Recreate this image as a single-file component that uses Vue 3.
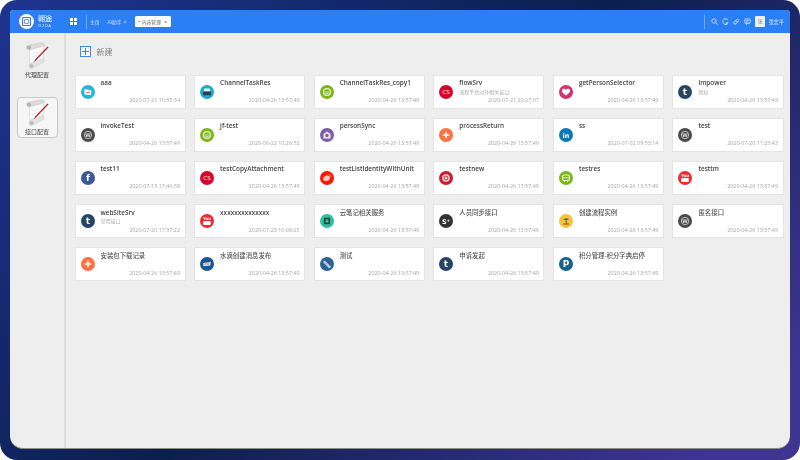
<template>
  <div class="frame">
    <div class="window">
      <header class="topbar">
        <div class="logo">
          <div class="logo-badge">
            <svg viewBox="0 0 15 15" width="15" height="15">
              <circle cx="7.5" cy="7.5" r="7.5" fill="#fff" />
              <rect x="3.5" y="3.5" width="8" height="8" rx="1" fill="none" stroke="#2b7ff5" stroke-width="1.2" />
              <rect x="5.7" y="5.7" width="3.6" height="3.6" fill="none" stroke="#2b7ff5" stroke-width="0.8" />
            </svg>
          </div>
          <div class="logo-text">
            <div class="logo-cn">翱途</div>
            <div class="logo-en">O2OA</div>
          </div>
        </div>
        <div class="apps"><i></i><i></i><i></i><i></i></div>
        <div class="divider first"></div>
        <nav class="tabs">
          <span class="tab">主页</span>
          <span class="tab">AI助手<b>×</b></span>
          <span class="tab active"><em></em>内容管理<b>×</b></span>
        </nav>
        <div class="right">
          <div class="divider"></div>
          <svg class="tool" viewBox="0 0 8 8"><circle cx="3.4" cy="3.4" r="2.5" /><path d="M5.2 5.2 7.4 7.4" /></svg>
          <svg class="tool" viewBox="0 0 8 8"><path d="M6.8 2.4A3.2 3.2 0 1 0 6.9 5.4L4.6 5.4" /><path d="M4 7.4h2" /></svg>
          <svg class="tool" viewBox="0 0 8 8"><path d="M1 5 5 1.2 7 3 3.2 6.8H1z" /><path d="M3 3.2 5 5" /></svg>
          <svg class="tool" viewBox="0 0 8 8"><rect x="1" y="1" width="6" height="5" rx="0.6" /><path d="M2.6 3h2.8M2.6 4.4h1.8M3 6 2.6 7.4 4.4 6" /></svg>
          <div class="avatar">张</div>
          <span class="user">张志平</span>
        </div>
      </header>
      <div class="body">
        <aside class="sidebar">
          <div v-for="item in menu" :key="item.label" class="menu-item" :class="{ selected: item.selected }">
            <svg class="scroll" viewBox="0 0 24 28" width="24" height="28">
              <path d="M4.5 7 19 3 18 18 5 24z" fill="#fbfbfb" stroke="#c4c4c4" stroke-width="0.5" />
              <path d="M7 12 16 9M7 15 15 12.5" stroke="#dedede" stroke-width="0.6" />
              <path d="M1.5 5.5C1.5 4 2.5 3.5 4 3L16 .8C18.5.4 20 1.5 19.5 3.5L7 7.500C4 8.500 2 8 1.500 5.500z" fill="#dcdcdc" stroke="#c0c0c0" stroke-width="0.4" />
              <ellipse cx="4" cy="5.5" rx="2.2" ry="2" fill="#b2b2b2" />
              <path d="M4 24C4 22 5 21.500 6 21L17 17C19 16.500 20 18 19 20L8 26C5.500 27 4 26 4 24z" fill="#e2e2e2" stroke="#c0c0c0" stroke-width="0.4" />
              <ellipse cx="6.5" cy="24" rx="2" ry="1.8" fill="#b8b8b8" />
              <path d="M10 18.500 23 5" stroke="#b3202a" stroke-width="1.2" />
              <path d="M10 18.500 8.800 19.800" stroke="#444" stroke-width="0.9" />
            </svg>
            <span class="menu-label">{{ item.label }}</span>
          </div>
        </aside>
        <main class="main">
          <div class="toolbar">
            <span class="add-btn"></span>
            <span class="add-text">新建</span>
          </div>
          <div class="grid">
            <div v-for="card in cards" :key="card.name" class="card">
              <span class="icon" :style="{ background: card.color }">
                <svg viewBox="0 0 14 14" width="14" height="14">
                  <template v-if="card.kind === 'image'">
                    <path d="M3.5 4 10.5 5.5 10 10 3.5 9.5z" fill="#fff" />
                    <path d="M5 8 9 7" stroke="#e0563f" stroke-width="1" />
                  </template>
                  <template v-else-if="card.kind === 'print'">
                    <path d="M4.5 3.5h5l1 3h-7z" fill="#e9f7fa" />
                    <rect x="3" y="6.5" width="8" height="3.8" rx="0.5" fill="#27404f" />
                  </template>
                  <template v-else-if="card.kind === 'ring'">
                    <circle cx="7" cy="7" r="3.4" fill="none" stroke="#e8f3d2" stroke-width="1.3" />
                    <path d="M5 7h4M5.5 8.500h3" stroke="#e8f3d2" stroke-width="0.8" />
                  </template>
                  <template v-else-if="card.kind === 'bus'">
                    <rect x="3.5" y="4" width="7" height="5.5" rx="1.5" fill="none" stroke="#f1f7e0" stroke-width="1.1" />
                    <path d="M4 6.800h6M5 10.500h1M8 10.500h1" stroke="#f1f7e0" stroke-width="0.9" />
                  </template>
                  <template v-else-if="card.kind === 'lastfm'">
                    <text x="7" y="9.2" class="glyph thin">CS</text>
                  </template>
                  <template v-else-if="card.kind === 'heart'">
                    <path d="M7 10.500C3.500 8 3 6.800 3 5.800 3 4.400 4 3.800 5 3.800 6 3.800 6.600 4.400 7 5 7.400 4.400 8 3.800 9 3.800 10 3.800 11 4.400 11 5.800 11 6.800 10.500 8 7 10.500z" fill="#fff" />
                  </template>
                  <template v-else-if="card.kind === 'wp'">
                    <circle cx="7" cy="7" r="3.7" fill="none" stroke="#ddd" stroke-width="0.8" />
                    <text x="7" y="8.9" class="glyph wp">W</text>
                  </template>
                  <template v-else-if="card.kind === 'camera'">
                    <path d="M7 3.500 10.500 6v4.500h-7V6z" fill="#efe8f6" />
                    <circle cx="7" cy="7.5" r="1.7" fill="#7b5ea7" />
                  </template>
                  <template v-else-if="card.kind === 'plus'">
                    <path d="M7 3.800v6.400M3.800 7h6.400" stroke="#fff" stroke-width="1.6" />
                  </template>
                  <template v-else-if="card.kind === 'weibo'">
                    <path d="M3 8c0-2 2.500-3.500 4.500-3.500S10 5.500 9.800 7.500C9.500 9.500 7.500 10 6 10S3 9.500 3 8z" fill="#ffc9c0" />
                    <path d="M9 3.500c1.500 0 2.300 1.200 2 2.500" stroke="#ffc9c0" stroke-width="0.7" fill="none" />
                  </template>
                  <template v-else-if="card.kind === 'pin'">
                    <circle cx="7" cy="7" r="3.8" fill="#f6dfe1" />
                    <circle cx="7" cy="7" r="2" fill="none" stroke="#c81e2d" stroke-width="1" />
                  </template>
                  <template v-else-if="card.kind === 'youtube'">
                    <text x="7" y="6.4" class="glyph yt">You</text>
                    <rect x="3.2" y="6.9" width="7.6" height="4.1" rx="1" fill="#fff" />
                  </template>
                  <template v-else-if="card.kind === 'book'">
                    <rect x="4" y="3.8" width="6" height="6.4" fill="#1e3f3a" />
                    <rect x="5.5" y="5.3" width="3" height="3.4" fill="#2fbf9f" />
                  </template>
                  <template v-else-if="card.kind === 'palm'">
                    <path d="M3.500 6C5 4 9 3.800 10.800 5.800 9 5.300 8.200 5.500 7.500 6L7.800 9.500H6.800L6.800 6C5.800 5.500 4.800 5.500 3.500 6z" fill="#27613b" />
                    <path d="M4 10h6" stroke="#3b3b2b" stroke-width="0.8" />
                  </template>
                  <template v-else-if="card.kind === 'digg'">
                    <path d="M3.200 6 10.800 5l-.4 3.500-7 .7z" fill="#dbe8f3" />
                    <path d="M4.500 7h5" stroke="#1a5590" stroke-width="0.5" />
                  </template>
                  <template v-else-if="card.kind === 'clip'">
                    <path d="M4.500 5 9.500 10" stroke="#d5e3f0" stroke-width="2.4" stroke-linecap="round" />
                    <path d="M4.500 5 9 9.500" stroke="#2f6198" stroke-width="0.4" />
                  </template>
                  <text v-else x="7" y="10" class="glyph" :class="{ small: card.small }">{{ card.glyph }}</text>
                </svg>
              </span>
              <div class="info">
                <div class="name" :class="{ cjk: isCjk(card.name) }">{{ card.name }}</div>
                <div class="desc">{{ card.desc }}</div>
                <div class="time">{{ card.time }}</div>
              </div>
            </div>
          </div>
        </main>
      </div>
    </div>
  </div>
</template>

<script setup>
const T = '2020-04-26 13:57:49'

const menu = [
  { label: '代理配置', selected: false },
  { label: '接口配置', selected: true }
]

const cards = [
  { name: 'aaa', time: '2020-07-21 10:55:34', color: '#28b5d6', kind: 'image' },
  { name: 'ChannelTaskRes', time: T, color: '#22a9c8', kind: 'print' },
  { name: 'ChannelTaskRes_copy1', time: T, color: '#7cb518', kind: 'ring' },
  { name: 'flowSrv', desc: '流程平台对外相关接口', time: '2020-07-21 20:27:07', color: '#d90429', kind: 'lastfm' },
  { name: 'getPersonSelector', time: T, color: '#d6336c', kind: 'heart' },
  { name: 'impower', desc: '授权', time: T, color: '#274567', glyph: 't' },
  { name: 'invokeTest', time: T, color: '#4a4a4a', kind: 'wp' },
  { name: 'jf-test', time: '2020-06-22 10:26:52', color: '#7cb518', kind: 'ring' },
  { name: 'personSync', time: T, color: '#7b5ea7', kind: 'camera' },
  { name: 'processReturn', time: T, color: '#ff7043', kind: 'plus' },
  { name: 'ss', time: '2020-07-02 09:53:14', color: '#0b78b8', glyph: 'in', small: true },
  { name: 'test', time: '2020-07-20 11:25:43', color: '#4a4a4a', kind: 'wp' },
  { name: 'test11', time: '2020-07-15 17:46:38', color: '#3b5998', glyph: 'f' },
  { name: 'testCopyAttachment', time: T, color: '#d90429', kind: 'lastfm' },
  { name: 'testListIdentityWithUnit', time: T, color: '#f71a06', kind: 'weibo' },
  { name: 'testnew', time: T, color: '#c81e2d', kind: 'pin' },
  { name: 'testres', time: T, color: '#7cb518', kind: 'bus' },
  { name: 'testtm', time: T, color: '#ee2a2e', kind: 'youtube' },
  { name: 'webSiteSrv', desc: '常用接口', time: '2020-07-20 17:37:22', color: '#274567', glyph: 't' },
  { name: 'xxxxxxxxxxxxxx', time: '2020-07-23 16:08:25', color: '#ee2a2e', kind: 'youtube' },
  { name: '云笔记相关服务', time: T, color: '#2fbf9f', kind: 'book' },
  { name: '人员同步接口', time: T, color: '#333333', glyph: 'S⁺', small: true },
  { name: '创建流程实例', time: T, color: '#fbc13c', kind: 'palm' },
  { name: '匿名接口', time: T, color: '#4a4a4a', kind: 'wp' },
  { name: '安装包下载记录', time: T, color: '#ff7043', kind: 'plus' },
  { name: '水滴创建消息发布', time: T, color: '#1a5590', kind: 'digg' },
  { name: '测试', time: T, color: '#2f6198', kind: 'clip' },
  { name: '申诉发起', time: T, color: '#274567', glyph: 't' },
  { name: '积分管理-积分字典启停', time: T, color: '#156190', glyph: 'P' }
]

function isCjk(text) {
  return /[^\x00-\x7f]/.test(text)
}
</script>

<style>
html, body {
  background: #fff;
  overflow: hidden;
}
</style>

<style scoped>
.frame {
  width: 800px;
  height: 460px;
  box-sizing: border-box;
  padding: 10px 10px 11px;
  border-radius: 17px;
  background: linear-gradient(135deg, #1e3591 0%, #0b1f4e 49%, #3f3590 92%);
  font-family: "Open Sans", "Noto Sans CJK SC", sans-serif;
  overflow: hidden;
}
.window {
  height: 100%;
  display: flex;
  flex-direction: column;
  background: #eeeeee;
  border-radius: 4px 4px 13px 13px;
  border-bottom: 1px solid #8d8d86;
  box-sizing: border-box;
  overflow: hidden;
  filter: blur(0.4px);
}
.topbar {
  height: 23px;
  flex: none;
  display: flex;
  align-items: center;
  background: #2b7ff5;
  color: #fff;
}
.logo {
  display: flex;
  align-items: center;
  margin-left: 9px;
}
.logo-badge {
  width: 15px;
  height: 15px;
}
.logo-badge svg {
  display: block;
}
.logo-text {
  margin-left: 3px;
  width: 16px;
  text-align: center;
}
.logo-cn {
  font-size: 7px;
  line-height: 8px;
}
.logo-en {
  margin-top: 1px;
  font-size: 3.5px;
  line-height: 4px;
  letter-spacing: 1px;
}
.apps {
  display: grid;
  grid-template-columns: 3px 3px;
  gap: 1px;
  margin-left: 17px;
}
.apps i {
  width: 3px;
  height: 3px;
  background: #fff;
}
.divider {
  width: 1px;
  height: 14px;
  background: #6fa8f8;
}
.divider.first {
  margin-left: 9px;
}
.tabs {
  display: flex;
  align-items: center;
  margin-left: 3px;
  font-size: 4.8px;
  color: #d5e5fd;
}
.tab {
  margin-right: 8px;
  white-space: nowrap;
}
.tab b {
  font-weight: 400;
  margin-left: 2px;
  font-size: 5.5px;
}
.tab.active {
  display: flex;
  align-items: center;
  height: 10.5px;
  width: 36px;
  box-sizing: border-box;
  padding-left: 3.5px;
  background: #fff;
  color: #666;
  border-radius: 1.5px;
}
.tab.active em {
  width: 1.5px;
  height: 1.5px;
  border-radius: 50%;
  background: #999;
  margin-right: 2px;
}
.tab.active b {
  margin-left: 3px;
  color: #444;
}
.right {
  margin-left: auto;
  display: flex;
  align-items: center;
  padding-right: 6px;
}
.tool {
  width: 7px;
  height: 7px;
  margin-left: 4px;
  fill: none;
  stroke: #e8f1fe;
  stroke-width: 0.9;
}
.right .divider + .tool {
  margin-left: 6px;
}
.avatar {
  width: 10.5px;
  height: 10.5px;
  margin-left: 4px;
  border-radius: 1px;
  background: #eeeeee;
  color: #888;
  font-size: 5px;
  line-height: 10.5px;
  text-align: center;
}
.user {
  margin-left: 3px;
  font-size: 5.2px;
  color: #e3eefe;
}
.body {
  flex: 1;
  min-height: 0;
  display: flex;
}
.sidebar {
  width: 54px;
  flex: none;
  border-right: 2px solid #dcdcdc;
  padding-top: 7px;
  display: flex;
  flex-direction: column;
  align-items: center;
  gap: 15.5px;
}
.menu-item {
  width: 41px;
  height: 41px;
  box-sizing: border-box;
  padding-top: 1px;
  display: flex;
  flex-direction: column;
  align-items: center;
  border: 1px solid transparent;
  border-radius: 4px;
}
.menu-item.selected {
  border-color: #c9c9c9;
  background: #f6f6f6;
}
.scroll {
  flex: none;
}
.menu-label {
  margin-top: 1px;
  font-size: 6px;
  line-height: 8px;
  color: #444;
  white-space: nowrap;
}
.main {
  flex: 1;
  min-width: 0;
  padding: 0 6.5px 0 8.5px;
}
.toolbar {
  height: 41.5px;
  display: flex;
  align-items: center;
  padding-left: 5px;
  padding-bottom: 4.5px;
  box-sizing: border-box;
}
.add-btn {
  position: relative;
  width: 11.5px;
  height: 11.5px;
  box-sizing: border-box;
  border: 1px solid #3d87ee;
  background: #f8fbff;
}
.add-btn::before,
.add-btn::after {
  content: "";
  position: absolute;
  background: #3d87ee;
}
.add-btn::before {
  left: 1.5px;
  right: 1.5px;
  top: 4px;
  height: 1.5px;
}
.add-btn::after {
  top: 1.5px;
  bottom: 1.5px;
  left: 4px;
  width: 1.5px;
}
.add-text {
  margin-left: 5.5px;
  font-size: 8px;
  color: #808080;
}
.grid {
  display: grid;
  grid-template-columns: repeat(6, 1fr);
  column-gap: 8.6px;
  row-gap: 9.2px;
}
.card {
  height: 34px;
  box-sizing: border-box;
  display: flex;
  align-items: center;
  padding: 0 4.5px 0 5px;
  background: #fff;
  border: 1px solid #e4e4e4;
}
.icon {
  width: 14px;
  height: 14px;
  flex: none;
  border-radius: 50%;
  overflow: hidden;
}
.icon svg {
  display: block;
}
.glyph {
  fill: #fff;
  font-family: "DejaVu Sans", sans-serif;
  font-size: 9px;
  font-weight: 700;
  text-anchor: middle;
}
.glyph.small {
  font-size: 6.5px;
}
.glyph.thin {
  font-size: 5.5px;
  font-weight: 400;
}
.glyph.wp {
  font-size: 5px;
  fill: #ddd;
}
.glyph.yt {
  font-size: 4px;
}
.info {
  flex: 1;
  min-width: 0;
  height: 100%;
  margin-left: 6px;
}
.name {
  padding-top: 3.5px;
  height: 8px;
  font-size: 6.4px;
  line-height: 8px;
  font-weight: 600;
  color: #444;
  white-space: nowrap;
}
.name.cjk {
  font-weight: 500;
  color: #555;
}
.desc {
  margin-top: 1.5px;
  height: 7px;
  font-size: 5px;
  line-height: 7px;
  color: #aaa;
  white-space: nowrap;
}
.time {
  margin-top: 1.5px;
  font-size: 5.4px;
  line-height: 7px;
  text-align: right;
  color: #a6a6a6;
  white-space: nowrap;
}
</style>
